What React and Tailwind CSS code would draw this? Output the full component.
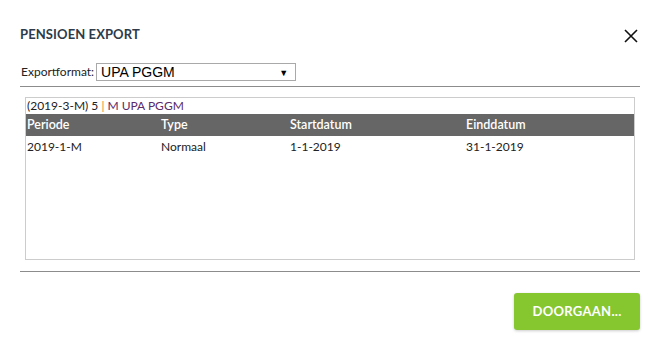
export default function App() {
  const rows = [{ periode: "2019-1-M", type: "Normaal", start: "1-1-2019", end: "31-1-2019" }];

  return (
    <div className="h-[345px] w-[659px] bg-white font-['Lato',sans-serif] text-[#222]">
      <div className="flex flex-col px-5">
        <div className="flex h-[20px] items-center justify-between mt-[24px]">
          <h2 className="text-[13px] font-bold leading-[20px] tracking-[0.1px] text-[#2e3b4a]">PENSIOEN EXPORT</h2>
          <svg width="14" height="14" viewBox="0 0 14 14" className="mr-[1px] mt-[4px]">
            <path d="M1 1 L13 13 M13 1 L1 13" stroke="#111" strokeWidth="1.6" />
          </svg>
        </div>

        <div className="mt-[19px] flex h-[18px] items-center gap-[2px] pl-[1px]">
          <span className="text-[12px] leading-[18px] text-[#222]">Exportformat:</span>
          <div className="flex h-[18px] w-[200px] items-center justify-between border border-[#a9a9a9] px-[4px]">
            <span className="font-['Liberation_Sans',sans-serif] text-[14px] leading-none text-black">UPA PGGM</span>
            <span className="mr-[3px] text-[9px] leading-none text-black">▼</span>
          </div>
        </div>

        <div className="mt-[5px] h-px w-[620px] bg-[#8c8c8c]" />

        <div className="ml-[5px] mt-[10px] h-[163px] w-[610px] border border-[#cccccc]">
          <div className="h-[16px] pl-[1px] text-[12px] leading-[15px]">
            <span>(2019-3-M) 5 </span>
            <span className="text-[#e0803a]">|</span>
            <span className="text-[#5a2a6a]"> M UPA PGGM</span>
          </div>
          <div className="grid h-[22px] grid-cols-[134px_129px_176px_1fr] items-center bg-[#666666] pl-[1px] text-[12.5px] font-semibold text-white">
            <span>Periode</span>
            <span>Type</span>
            <span>Startdatum</span>
            <span>Einddatum</span>
          </div>
          {rows.map((row) => (
            <div
              key={row.periode}
              className="grid h-[21px] grid-cols-[134px_129px_176px_1fr] items-center pl-[1px] text-[12px] text-[#222]"
            >
              <span>{row.periode}</span>
              <span>{row.type}</span>
              <span>{row.start}</span>
              <span>{row.end}</span>
            </div>
          ))}
        </div>

        <div className="mt-[11px] h-px w-[620px] bg-[#8c8c8c]" />

        <div className="mt-[21px] flex w-[620px] justify-end">
          <button
            type="button"
            className="h-[37px] w-[126px] rounded-[3px] bg-[#86c62f] text-[13px] font-bold tracking-[0.3px] text-white shadow-[0_1px_3px_rgba(0,0,0,0.2)]"
          >
            DOORGAAN...
          </button>
        </div>
      </div>
    </div>
  );
}
